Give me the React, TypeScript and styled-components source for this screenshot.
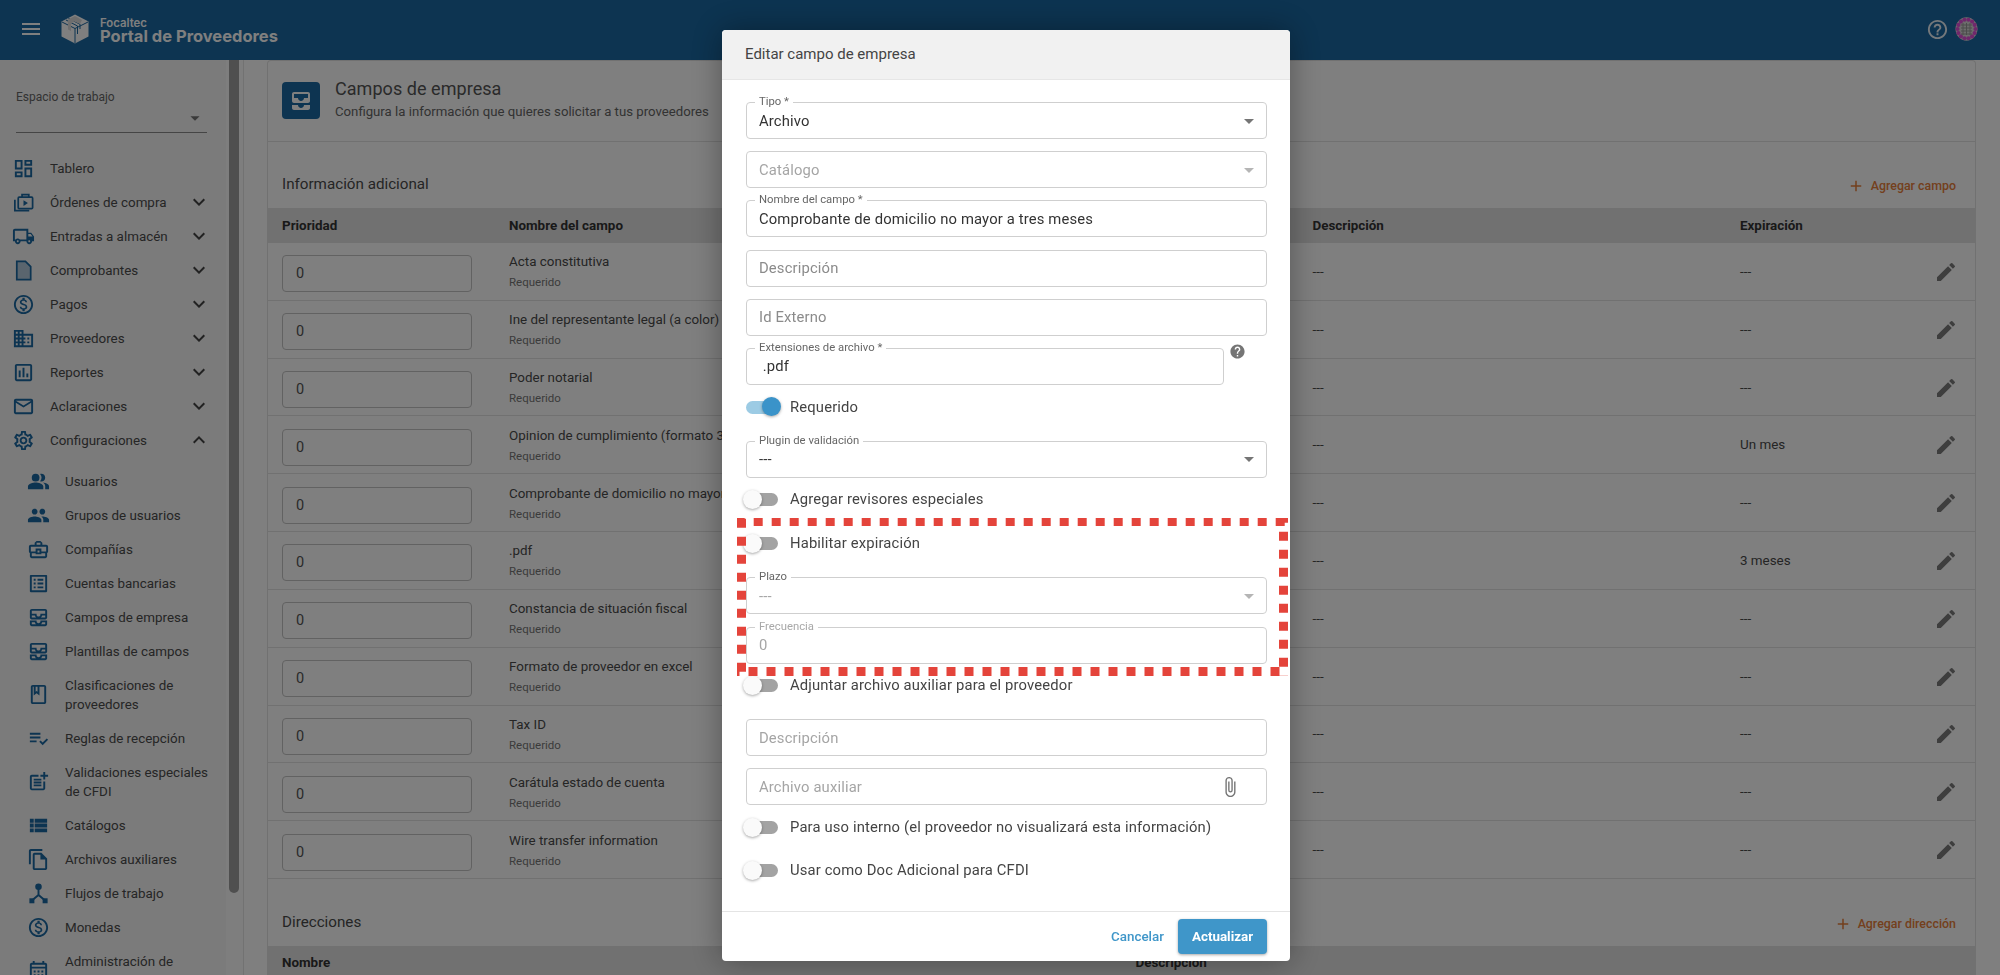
import React from "react";
import styled, { createGlobalStyle } from "styled-components";
import {
  MdMenu,
  MdHelpOutline,
  MdHelp,
  MdEdit,
  MdAdd,
  MdExpandMore,
  MdExpandLess,
  MdArrowDropDown,
  MdAttachFile,
  MdAllInbox,
  MdOutlineAllInbox,
  MdOutlineDashboard,
  MdOutlineLocalShipping,
  MdOutlineMonetizationOn,
  MdOutlineDomain,
  MdOutlineAssessment,
  MdMailOutline,
  MdOutlineSettings,
  MdPeopleAlt,
  MdPeople,
  MdOutlineBusinessCenter,
  MdOutlineListAlt,
  MdOutlineBook,
  MdPlaylistAddCheck,
  MdOutlinePostAdd,
  MdViewList,
  MdOutlineFileCopy,
  MdOutlineCalendarMonth,
} from "react-icons/md";

const GlobalStyle = createGlobalStyle`
  html, body {
    margin: 0;
    height: 100%;
    overflow: hidden;
    font-family: Roboto, "Liberation Sans", sans-serif;
    color: #333;
  }
  * {
    box-sizing: border-box;
  }
`;

const Page = styled.div`
  height: 100vh;
  display: flex;
  flex-direction: column;
  overflow: hidden;
  background: #fff;
`;

const Header = styled.header`
  flex: 0 0 60px;
  display: flex;
  align-items: center;
  background: #1a68a2;
  color: #fff;
  padding: 0 22px 2px 19px;
`;

const MenuButton = styled.div`
  display: flex;
  font-size: 24px;
  margin-right: 17px;
`;

const LogoText = styled.div`
  display: flex;
  flex-direction: column;
  margin-left: 10px;
  font-family: Inter, Roboto, sans-serif;
`;

const LogoSmall = styled.span`
  font-size: 11.4px;
  font-weight: 600;
  line-height: 12px;
  margin-top: 3px;
`;

const LogoBig = styled.span`
  font-size: 16.5px;
  font-weight: 700;
  line-height: 17px;
  margin-top: -1px;
`;

const HeaderActions = styled.div`
  margin-left: auto;
  display: flex;
  align-items: center;
  gap: 6px;
  font-size: 23px;
  color: rgba(255, 255, 255, 0.9);
`;

const Body = styled.div`
  flex: 1;
  display: flex;
  min-height: 0;
`;

const Sidebar = styled.aside`
  flex: 0 0 244px;
  display: flex;
  border-right: 1px solid #e4e4e4;
  overflow: hidden;
`;

const SideContent = styled.nav`
  flex: 0 0 226px;
  background: #f6f6f6;
  overflow: hidden;
`;

const ScrollTrack = styled.div`
  flex: 1;
  padding-left: 3px;
  background: #fdfdfd;
`;

const ScrollThumb = styled.div`
  width: 10px;
  height: 833px;
  border-radius: 0 0 5px 5px;
  background: #9f9f9f;
`;

const Workspace = styled.div`
  padding: 30px 19px 18px 16px;
  height: 91px;
`;

const WorkspaceLabel = styled.div`
  font-size: 12px;
  line-height: 14px;
  color: #666;
`;

const WorkspaceSelect = styled.div`
  height: 29px;
  border-bottom: 1px solid #8a8a8a;
  display: flex;
  justify-content: flex-end;
  align-items: center;
  color: #757575;
  font-size: 22px;
  padding-right: 1px;
`;

const NavRow = styled.div<{ $sub?: boolean; $gap?: number }>`
  min-height: 34px;
  padding: 7.5px 15px 7.5px ${(p) => (p.$sub ? 26 : 11)}px;
  margin-bottom: ${(p) => p.$gap ?? 0}px;
  display: flex;
  align-items: center;
  font-size: 13.4px;
  line-height: 19px;
  color: #4c4c4c;
  white-space: pre-line;
`;

const NavIcon = styled.span`
  flex: 0 0 39px;
  display: flex;
  height: 19px;
  align-items: center;
  color: #1a68a2;
  svg {
    width: 23px;
    height: 23px;
    margin-left: 0.5px;
  }
`;

const NavChevron = styled.span`
  margin-left: auto;
  display: flex;
  font-size: 24px;
  color: #444;
  margin-top: -3px;
  margin-bottom: -3px;
`;

const Main = styled.main`
  flex: 1;
  padding: 0 24px 0 23px;
  min-width: 0;
  overflow: hidden;
`;

const Card = styled.section`
  border: 1px solid #e2e2e2;
  border-bottom: none;
  border-radius: 4px 4px 0 0;
  background: #fff;
  height: 1200px;
`;

const PageHead = styled.div`
  height: 81px;
  padding: 21px 14px 0;
  display: flex;
  gap: 15px;
  border-bottom: 1px solid #e2e2e2;
`;

const PageIcon = styled.div`
  width: 38px;
  height: 37px;
  border-radius: 4px;
  background: #1a68a2;
  color: #fff;
  font-size: 24px;
  display: flex;
  align-items: center;
  justify-content: center;
`;

const PageTitle = styled.div`
  font-size: 18px;
  line-height: 20px;
  letter-spacing: 0.05px;
  margin-top: -3px;
  color: #555;
`;

const PageSubtitle = styled.div`
  font-size: 13.2px;
  line-height: 18px;
  margin-top: 4px;
  color: #666;
`;

const SectionHead = styled.div<{ $height: number }>`
  height: ${(p) => p.$height}px;
  padding: 0 19px 0 14px;
  display: flex;
  align-items: flex-end;
  justify-content: space-between;
`;

const SectionTitle = styled.div`
  font-size: 15.2px;
  line-height: 18px;
  padding-bottom: 15px;
  color: #4a4a4a;
`;

const AddLink = styled.div`
  display: flex;
  align-items: center;
  gap: 6px;
  color: #e8803a;
  font-size: 12.4px;
  font-weight: 500;
  line-height: 18px;
  padding-bottom: 13px;
  svg {
    font-size: 18px;
  }
`;

const TableRow = styled.div<{ $head?: boolean }>`
  display: grid;
  grid-template-columns: 227px 803.5px 427.5px 1fr 41px;
  align-items: center;
  padding-left: 14px;
  height: ${(p) => (p.$head ? 35 : 57.82)}px;
  background: ${(p) => (p.$head ? "#e2e2e2" : "#fff")};
  border-bottom: 1px solid #e2e2e2;
  font-size: 13.4px;
  font-weight: ${(p) => (p.$head ? 700 : 400)};
  color: ${(p) => (p.$head ? "#333" : "#4a4a4a")};
`;

const AddressHead = styled(TableRow)`
  grid-template-columns: 853.5px 1fr;
`;

const PriorityInput = styled.div`
  width: 190px;
  height: 37px;
  margin-top: 5px;
  border: 1px solid #c4c4c4;
  border-radius: 4px;
  display: flex;
  align-items: center;
  padding-left: 13px;
  font-size: 14.5px;
  color: #555;
`;

const FieldName = styled.div`
  font-size: 13.4px;
  line-height: 18px;
  color: #4a4a4a;
  white-space: nowrap;
`;

const FieldNote = styled.div`
  font-size: 11.5px;
  line-height: 14px;
  margin-top: 4px;
  color: #777;
`;

const RowEdit = styled.div`
  display: flex;
  font-size: 24px;
  margin-top: 1px;
  color: #7c7c7c;
`;

const Backdrop = styled.div`
  position: fixed;
  inset: 0;
  padding: 30px 0 0 12px;
  display: flex;
  justify-content: center;
  align-items: flex-start;
  background: rgba(0, 0, 0, 0.5);
`;

const Dialog = styled.div`
  position: relative;
  width: 568px;
  height: 931px;
  display: flex;
  flex-direction: column;
  background: #fff;
  border-radius: 4px;
  box-shadow: 0 0 32px rgba(0, 0, 0, 0.35);
`;

const DialogHead = styled.div`
  flex: 0 0 50px;
  display: flex;
  align-items: center;
  padding: 0 23px 2px;
  background: #f1f1f1;
  border-bottom: 1px solid #e6e6e6;
  border-radius: 4px 4px 0 0;
  font-size: 15px;
  color: #444;
`;

const DialogBody = styled.div`
  flex: 1;
  padding: 22px 23px 0 24px;
  display: flex;
  flex-direction: column;
`;

const DialogFoot = styled.div`
  flex: 0 0 50px;
  display: flex;
  align-items: center;
  justify-content: flex-end;
  gap: 14px;
  padding: 0 23px 1px;
  border-top: 1px solid #e4e4e4;
`;

const CancelButton = styled.div`
  color: #3f96c9;
  font-size: 13.4px;
  font-weight: 500;
`;

const SubmitButton = styled.div`
  width: 89px;
  height: 35px;
  display: flex;
  align-items: center;
  justify-content: center;
  border-radius: 4px;
  background: #3f96c9;
  color: #fff;
  font-size: 13.4px;
  font-weight: 700;
  box-shadow: 0 1px 3px rgba(0, 0, 0, 0.35);
`;

const FieldBox = styled.div<{ $last?: boolean; $muted?: boolean }>`
  position: relative;
  flex: 0 0 37px;
  height: 37px;
  margin-bottom: ${(p) => (p.$last ? 0 : 12.2)}px;
  padding: 0 5px 0 12px;
  display: flex;
  align-items: center;
  border: 1px solid #cfcfcf;
  border-radius: 4px;
  font-size: 14.8px;
  letter-spacing: 0.15px;
  color: ${(p) => (p.$muted ? "#a5a5a5" : "#333")};
`;

const FieldLegend = styled.span<{ $muted?: boolean }>`
  position: absolute;
  left: 8px;
  top: -7px;
  padding: 0 4px;
  background: #fff;
  font-size: 11.3px;
  line-height: 12px;
  letter-spacing: 0;
  color: ${(p) => (p.$muted ? "#a8a8a8" : "#666")};
`;

const FieldPlaceholder = styled.span`
  color: #8b8b8b;
`;

const FieldHint = styled.span`
  color: #a5a5a5;
`;

const FieldTrailing = styled.span<{ $muted?: boolean }>`
  margin-left: auto;
  display: flex;
  font-size: 24px;
  color: ${(p) => (p.$muted ? "#b5b5b5" : "#757575")};
`;

const ClipSlot = styled.span`
  margin-left: auto;
  margin-right: 20px;
  display: flex;
  font-size: 22px;
  color: #757575;
`;

const FieldWithHelp = styled.div`
  display: flex;
  flex: 0 0 37px;
`;

const HelpSlot = styled.div`
  flex: 0 0 43px;
  padding: 0 0 0 5px;
  margin-top: -5px;
  font-size: 17px;
  color: #757575;
`;

const GrowBox = styled(FieldBox)`
  flex: 1;
`;

const ToggleRow = styled.div<{ $mt: number; $mb: number }>`
  flex: 0 0 30px;
  margin: ${(p) => p.$mt}px 0 ${(p) => p.$mb}px;
  display: flex;
  align-items: center;
  gap: 12px;
  font-size: 14.8px;
  letter-spacing: 0.15px;
  color: #444;
`;

const Track = styled.span<{ $on?: boolean }>`
  position: relative;
  width: 32px;
  height: 13px;
  margin-top: 1px;
  border-radius: 7px;
  background: ${(p) => (p.$on ? "#9ccbe4" : "#a3a3a3")};
`;

const Thumb = styled.span<{ $on?: boolean }>`
  position: absolute;
  top: -3.5px;
  left: ${(p) => (p.$on ? 16 : -3)}px;
  width: 19px;
  height: 19px;
  border-radius: 50%;
  background: ${(p) => (p.$on ? "#3a93c9" : "#fafafa")};
  box-shadow: 0 1px 3px rgba(0, 0, 0, 0.35);
`;

const Annotation = styled.svg`
  position: absolute;
  left: 15px;
  top: 488px;
`;

const BoxLogo = () => (
  <svg width="30" height="30" viewBox="0 0 30 30">
    <path d="M15 0.5 28.5 7.5V22.5L15 29.5 1.5 22.5V7.5Z" fill="#fff" />
    <path
      d="M2 8 15 14.5 28 8M15 14.5V29M8.5 4.5 20 10.2V15M6 6 17.5 12V20"
      fill="none"
      stroke="#1a68a2"
      strokeWidth="1"
    />
    <path d="M8 5.5 15 2 22 6 20 10 14 7.5 11 9.5V17L8 15.5Z" fill="#ddd" />
  </svg>
);

const Avatar = () => {
  const dots = Array.from({ length: 14 }, (_, i) => (i / 14) * Math.PI * 2);
  return (
    <svg width="23" height="24" viewBox="0 0 23 24">
      <ellipse cx="11.5" cy="12" rx="11" ry="11.7" fill="#d9d9d9" />
      {dots.map((a) => (
        <circle
          key={a}
          cx={11.5 + Math.cos(a) * 9}
          cy={12 + Math.sin(a) * 9.5}
          r="2.1"
          fill="#e04ed8"
        />
      ))}
      <path
        d="M6 8h11M6 11h11M6 14h11M6 17h11M8 6v12M11.5 6v12M15 6v12"
        stroke="#999"
        strokeWidth="1"
      />
    </svg>
  );
};

const OrdersIcon = () => (
  <svg viewBox="0 0 24 24" fill="none" stroke="currentColor" strokeWidth="1.8">
    <rect x="6.5" y="6.5" width="15" height="12" rx="1" />
    <path d="M10.5 6.5V3.8h7v2.7M3 9v11.5h15" />
    <path d="M12 9.6v6l4.6-3z" fill="currentColor" stroke="none" />
  </svg>
);

const DocumentIcon = () => (
  <svg viewBox="0 0 24 24" fill="none" stroke="currentColor" strokeWidth="1.8">
    <path d="M5 2.5h9l5.5 5.5v13.5H5z" fill="currentColor" fillOpacity="0.3" />
  </svg>
);

const FlowIcon = () => (
  <svg viewBox="0 0 24 24" fill="currentColor">
    <circle cx="12" cy="5" r="3.4" />
    <rect x="2.5" y="17" width="5.2" height="5.2" />
    <rect x="16.3" y="17" width="5.2" height="5.2" />
    <path d="M11 7h2v6l5.6 4.8-1.3 1.5L12 14.8l-5.3 4.5-1.3-1.5L11 13z" />
  </svg>
);

const mainNav = [
  { icon: <MdOutlineDashboard />, label: "Tablero" },
  { icon: <OrdersIcon />, label: "Órdenes de compra", more: true },
  { icon: <MdOutlineLocalShipping />, label: "Entradas a almacén", more: true },
  { icon: <DocumentIcon />, label: "Comprobantes", more: true },
  { icon: <MdOutlineMonetizationOn />, label: "Pagos", more: true },
  { icon: <MdOutlineDomain />, label: "Proveedores", more: true },
  { icon: <MdOutlineAssessment />, label: "Reportes", more: true },
  { icon: <MdMailOutline />, label: "Aclaraciones", more: true },
];

const subNav = [
  { icon: <MdPeopleAlt />, label: "Usuarios" },
  { icon: <MdPeople />, label: "Grupos de usuarios" },
  { icon: <MdOutlineBusinessCenter />, label: "Compañías" },
  { icon: <MdOutlineListAlt />, label: "Cuentas bancarias" },
  { icon: <MdOutlineAllInbox />, label: "Campos de empresa" },
  { icon: <MdOutlineAllInbox />, label: "Plantillas de campos" },
  { icon: <MdOutlineBook />, label: "Clasificaciones de proveedores" },
  { icon: <MdPlaylistAddCheck />, label: "Reglas de recepción" },
  { icon: <MdOutlinePostAdd />, label: "Validaciones especiales de CFDI" },
  { icon: <MdViewList />, label: "Catálogos" },
  { icon: <MdOutlineFileCopy />, label: "Archivos auxiliares" },
  { icon: <FlowIcon />, label: "Flujos de trabajo" },
  { icon: <MdOutlineMonetizationOn />, label: "Monedas" },
  { icon: <MdOutlineCalendarMonth />, label: "Administración de\n\u00a0" },
];

const rows = [
  { name: "Acta constitutiva", expiry: "---" },
  { name: "Ine del representante legal (a color)", expiry: "---" },
  { name: "Poder notarial", expiry: "---" },
  { name: "Opinion de cumplimiento (formato 32D)", expiry: "Un mes" },
  { name: "Comprobante de domicilio no mayor a tres meses", expiry: "---" },
  { name: ".pdf", expiry: "3 meses" },
  { name: "Constancia de situación fiscal", expiry: "---" },
  { name: "Formato de proveedor en excel", expiry: "---" },
  { name: "Tax ID", expiry: "---" },
  { name: "Carátula estado de cuenta", expiry: "---" },
  { name: "Wire transfer information", expiry: "---" },
];

const Toggle = ({ on, label, mt, mb }: { on?: boolean; label: string; mt: number; mb: number }) => (
  <ToggleRow $mt={mt} $mb={mb}>
    <Track $on={on}>
      <Thumb $on={on} />
    </Track>
    {label}
  </ToggleRow>
);

export default function App() {
  return (
    <>
      <GlobalStyle />
      <Page>
        <Header>
          <MenuButton>
            <MdMenu />
          </MenuButton>
          <BoxLogo />
          <LogoText>
            <LogoSmall>Focaltec</LogoSmall>
            <LogoBig>Portal de Proveedores</LogoBig>
          </LogoText>
          <HeaderActions>
            <MdHelpOutline />
            <Avatar />
          </HeaderActions>
        </Header>
        <Body>
          <Sidebar>
            <SideContent>
              <Workspace>
                <WorkspaceLabel>Espacio de trabajo</WorkspaceLabel>
                <WorkspaceSelect>
                  <MdArrowDropDown />
                </WorkspaceSelect>
              </Workspace>
              {mainNav.map((item) => (
                <NavRow key={item.label}>
                  <NavIcon>{item.icon}</NavIcon>
                  {item.label}
                  {item.more && (
                    <NavChevron>
                      <MdExpandMore />
                    </NavChevron>
                  )}
                </NavRow>
              ))}
              <NavRow $gap={7}>
                <NavIcon>
                  <MdOutlineSettings />
                </NavIcon>
                Configuraciones
                <NavChevron>
                  <MdExpandLess />
                </NavChevron>
              </NavRow>
              {subNav.map((item) => (
                <NavRow $sub key={item.label}>
                  <NavIcon>{item.icon}</NavIcon>
                  {item.label}
                </NavRow>
              ))}
            </SideContent>
            <ScrollTrack>
              <ScrollThumb />
            </ScrollTrack>
          </Sidebar>
          <Main>
            <Card>
              <PageHead>
                <PageIcon>
                  <MdAllInbox />
                </PageIcon>
                <div>
                  <PageTitle>Campos de empresa</PageTitle>
                  <PageSubtitle>Configura la información que quieres solicitar a tus proveedores</PageSubtitle>
                </div>
              </PageHead>
              <SectionHead $height={66}>
                <SectionTitle>Información adicional</SectionTitle>
                <AddLink>
                  <MdAdd />
                  Agregar campo
                </AddLink>
              </SectionHead>
              <TableRow $head>
                <span>Prioridad</span>
                <span>Nombre del campo</span>
                <span>Descripción</span>
                <span>Expiración</span>
                <span />
              </TableRow>
              {rows.map((row) => (
                <TableRow key={row.name}>
                  <PriorityInput>0</PriorityInput>
                  <div>
                    <FieldName>{row.name}</FieldName>
                    <FieldNote>Requerido</FieldNote>
                  </div>
                  <span>---</span>
                  <span>{row.expiry}</span>
                  <RowEdit>
                    <MdEdit />
                  </RowEdit>
                </TableRow>
              ))}
              <SectionHead $height={67}>
                <SectionTitle>Direcciones</SectionTitle>
                <AddLink>
                  <MdAdd />
                  Agregar dirección
                </AddLink>
              </SectionHead>
              <AddressHead $head>
                <span>Nombre</span>
                <span>Descripción</span>
              </AddressHead>
            </Card>
          </Main>
        </Body>
      </Page>
      <Backdrop>
        <Dialog>
          <DialogHead>Editar campo de empresa</DialogHead>
          <DialogBody>
            <FieldBox>
              <FieldLegend>Tipo *</FieldLegend>
              Archivo
              <FieldTrailing>
                <MdArrowDropDown />
              </FieldTrailing>
            </FieldBox>
            <FieldBox>
              <FieldHint>Catálogo</FieldHint>
              <FieldTrailing $muted>
                <MdArrowDropDown />
              </FieldTrailing>
            </FieldBox>
            <FieldBox>
              <FieldLegend>Nombre del campo *</FieldLegend>
              Comprobante de domicilio no mayor a tres meses
            </FieldBox>
            <FieldBox>
              <FieldPlaceholder>Descripción</FieldPlaceholder>
            </FieldBox>
            <FieldBox>
              <FieldPlaceholder>Id Externo</FieldPlaceholder>
            </FieldBox>
            <FieldWithHelp>
              <GrowBox $last>
                <FieldLegend>Extensiones de archivo *</FieldLegend>
                &nbsp;.pdf
              </GrowBox>
              <HelpSlot>
                <MdHelp />
              </HelpSlot>
            </FieldWithHelp>
            <Toggle on label="Requerido" mt={6.7} mb={19.3} />
            <FieldBox $last>
              <FieldLegend>Plugin de validación</FieldLegend>
              ---
              <FieldTrailing>
                <MdArrowDropDown />
              </FieldTrailing>
            </FieldBox>
            <Toggle label="Agregar revisores especiales" mt={6.5} mb={13.7} />
            <Toggle label="Habilitar expiración" mt={0} mb={19.3} />
            <FieldBox $muted>
              <FieldLegend>Plazo</FieldLegend>
              ---
              <FieldTrailing $muted>
                <MdArrowDropDown />
              </FieldTrailing>
            </FieldBox>
            <FieldBox $muted $last>
              <FieldLegend $muted>Frecuencia</FieldLegend>
              0
            </FieldBox>
            <Toggle label="Adjuntar archivo auxiliar para el proveedor" mt={6.5} mb={19} />
            <FieldBox>
              <FieldHint>Descripción</FieldHint>
            </FieldBox>
            <FieldBox $last>
              <FieldHint>Archivo auxiliar</FieldHint>
              <ClipSlot>
                <MdAttachFile />
              </ClipSlot>
            </FieldBox>
            <Toggle label="Para uso interno (el proveedor no visualizará esta información)" mt={7} mb={13} />
            <Toggle label="Usar como Doc Adicional para CFDI" mt={0} mb={0} />
          </DialogBody>
          <DialogFoot>
            <CancelButton>Cancelar</CancelButton>
            <SubmitButton>Actualizar</SubmitButton>
          </DialogFoot>
          <Annotation width="551" height="158" viewBox="0 0 551 158">
            <g fill="none" stroke="#e4443b" strokeDasharray="9 9">
              <path d="M-1.3 4H551" strokeWidth="8" />
              <path d="M4.5 0.7V158" strokeWidth="9" />
              <path d="M546.5 -4.3V158" strokeWidth="9" />
              <path d="M-6.5 153.5H551" strokeWidth="9" />
            </g>
          </Annotation>
        </Dialog>
      </Backdrop>
    </>
  );
}
